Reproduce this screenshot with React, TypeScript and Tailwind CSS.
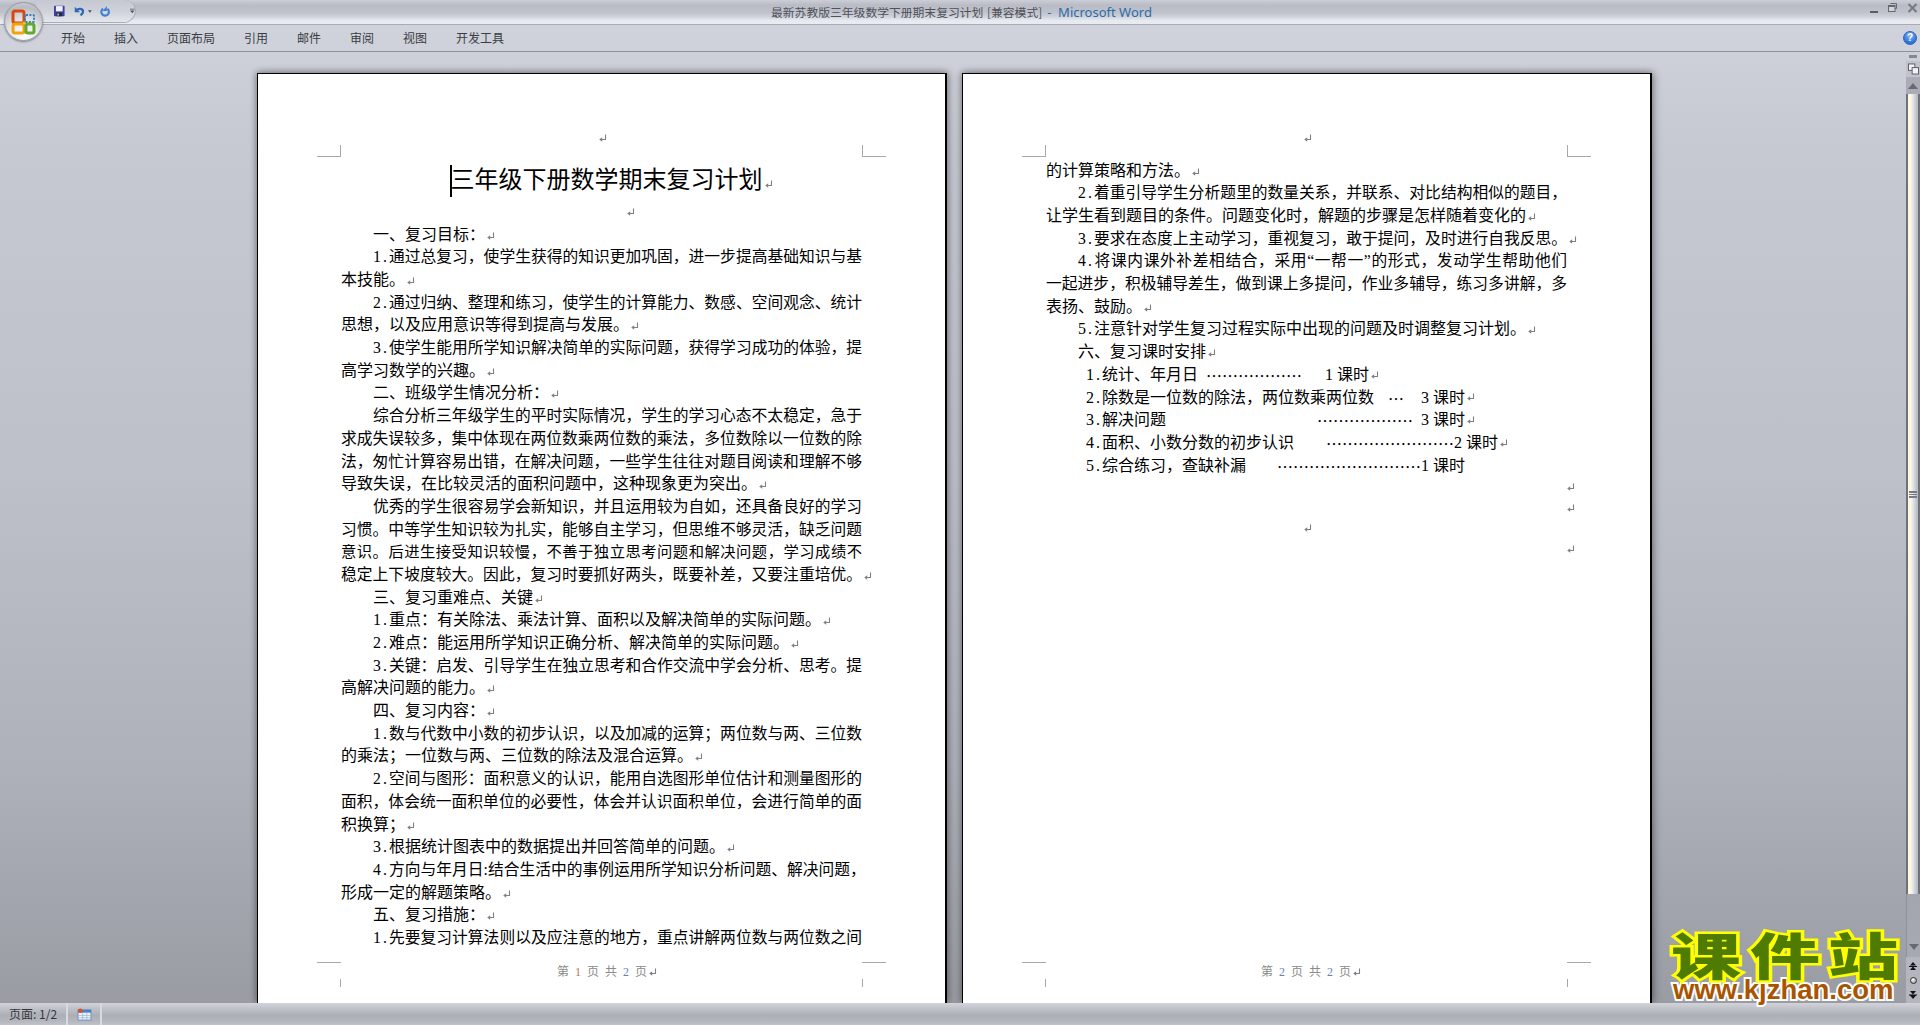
import React from 'react'

// paragraph mark shown by Word
const Mark = ({ className = '' }: { className?: string }) => (
  <svg viewBox="0 0 8 9" className={`inline-block w-[8px] h-[9px] ml-[2px] align-[-1px] ${className}`}>
    <path d="M6.5 0.5V5.5H2" fill="none" stroke="#808080" strokeWidth="1.1" />
    <path d="M0.2 5.5L3.2 3.2V7.8Z" fill="#808080" />
  </svg>
)

// SimSun keeps "1." at a full 16px, the serif fallback does not
const Num = ({ children }: { children: React.ReactNode }) => (
  <span className="inline-block w-[16px] tracking-[2px] [text-align-last:left]">{children}</span>
)

const withNum = (text: string) => {
  const m = text.match(/^(\d\.)(.*)$/)
  if (!m) return text
  return (
    <>
      <Num>{m[1]}</Num>
      {m[2]}
    </>
  )
}

type LineProps = {
  text: string
  indent?: boolean
  full?: boolean
  mark?: boolean
  small?: boolean
}

const Line = ({ text, indent, full, mark, small }: LineProps) => {
  if (full) {
    return (
      <div className={`flex h-[22.7px] leading-[22.7px] whitespace-nowrap ${indent ? 'pl-[32px]' : ''}`}>
        <div className={`flex-1 text-justify [text-align-last:justify] ${small ? 'text-[15.3px]' : 'text-[15.75px]'}`}>{withNum(text)}</div>
        {mark && <div className="w-0"><Mark /></div>}
      </div>
    )
  }
  return (
    <div className={`h-[22.7px] leading-[22.7px] text-[16px] whitespace-nowrap ${indent ? 'pl-[32px]' : ''}`}>
      {withNum(text)}
      {mark && <Mark />}
    </div>
  )
}

const pageOne: LineProps[] = [
  { text: '一、复习目标：', indent: true, mark: true },
  { text: '1.通过总复习，使学生获得的知识更加巩固，进一步提高基础知识与基', indent: true, full: true },
  { text: '本技能。', mark: true },
  { text: '2.通过归纳、整理和练习，使学生的计算能力、数感、空间观念、统计', indent: true, full: true },
  { text: '思想，以及应用意识等得到提高与发展。', mark: true },
  { text: '3.使学生能用所学知识解决简单的实际问题，获得学习成功的体验，提', indent: true, full: true },
  { text: '高学习数学的兴趣。', mark: true },
  { text: '二、班级学生情况分析：', indent: true, mark: true },
  { text: '综合分析三年级学生的平时实际情况，学生的学习心态不太稳定，急于', indent: true, full: true },
  { text: '求成失误较多，集中体现在两位数乘两位数的乘法，多位数除以一位数的除', full: true },
  { text: '法，匆忙计算容易出错，在解决问题，一些学生往往对题目阅读和理解不够', full: true },
  { text: '导致失误，在比较灵活的面积问题中，这种现象更为突出。', mark: true },
  { text: '优秀的学生很容易学会新知识，并且运用较为自如，还具备良好的学习', indent: true, full: true },
  { text: '习惯。中等学生知识较为扎实，能够自主学习，但思维不够灵活，缺乏问题', full: true },
  { text: '意识。后进生接受知识较慢，不善于独立思考问题和解决问题，学习成绩不', full: true, small: true },
  { text: '稳定上下坡度较大。因此，复习时要抓好两头，既要补差，又要注重培优。', full: true, mark: true },
  { text: '三、复习重难点、关键', indent: true, mark: true },
  { text: '1.重点：有关除法、乘法计算、面积以及解决简单的实际问题。', indent: true, mark: true },
  { text: '2.难点：能运用所学知识正确分析、解决简单的实际问题。', indent: true, mark: true },
  { text: '3.关键：启发、引导学生在独立思考和合作交流中学会分析、思考。提', indent: true, full: true },
  { text: '高解决问题的能力。', mark: true },
  { text: '四、复习内容：', indent: true, mark: true },
  { text: '1.数与代数中小数的初步认识，以及加减的运算；两位数与两、三位数', indent: true, full: true },
  { text: '的乘法；一位数与两、三位数的除法及混合运算。', mark: true },
  { text: '2.空间与图形：面积意义的认识，能用自选图形单位估计和测量图形的', indent: true, full: true },
  { text: '面积，体会统一面积单位的必要性，体会并认识面积单位，会进行简单的面', full: true },
  { text: '积换算；', mark: true },
  { text: '3.根据统计图表中的数据提出并回答简单的问题。', indent: true, mark: true },
  { text: '4.方向与年月日:结合生活中的事例运用所学知识分析问题、解决问题，', indent: true, full: true },
  { text: '形成一定的解题策略。', mark: true },
  { text: '五、复习措施：', indent: true, mark: true },
  { text: '1.先要复习计算法则以及应注意的地方，重点讲解两位数与两位数之间', indent: true, full: true },
]

const pageTwo: LineProps[] = [
  { text: '的计算策略和方法。', mark: true },
  { text: '2.着重引导学生分析题里的数量关系，并联系、对比结构相似的题目，', indent: true, full: true },
  { text: '让学生看到题目的条件。问题变化时，解题的步骤是怎样随着变化的', mark: true },
  { text: '3.要求在态度上主动学习，重视复习，敢于提问，及时进行自我反思。', indent: true, full: true, mark: true },
  { text: '4.将课内课外补差相结合，采用“一帮一”的形式，发动学生帮助他们', indent: true, full: true },
  { text: '一起进步，积极辅导差生，做到课上多提问，作业多辅导，练习多讲解，多', full: true },
  { text: '表扬、鼓励。', mark: true },
  { text: '5.注意针对学生复习过程实际中出现的问题及时调整复习计划。', indent: true, mark: true },
  { text: '六、复习课时安排', indent: true, mark: true },
]

const tabs = [
  { label: '开始', cls: 'ml-[61px]' },
  { label: '插入', cls: 'ml-[29px]' },
  { label: '页面布局', cls: 'ml-[29px]' },
  { label: '引用', cls: 'ml-[29px]' },
  { label: '邮件', cls: 'ml-[29px]' },
  { label: '审阅', cls: 'ml-[29px]' },
  { label: '视图', cls: 'ml-[29px]' },
  { label: '开发工具', cls: 'ml-[29px]' },
]

const OfficeButton = () => (
  <div className="absolute left-[4px] top-[2px] w-[39px] h-[39px] rounded-full border border-[#9a9da4] bg-[radial-gradient(circle_at_50%_85%,#ffffff_0%,#e6e7ea_40%,#b9bbc2_75%,#d8d9de_100%)] shadow-[0_1px_2px_rgba(0,0,0,0.4)] flex items-center justify-center">
    <svg viewBox="0 0 26 26" className="w-[26px] h-[26px]">
      <rect x="2" y="2" width="11" height="12" rx="2" fill="none" stroke="#d9480f" strokeWidth="3" />
      <rect x="14" y="6" width="9" height="7" rx="1" fill="none" stroke="#2f7fc4" strokeWidth="2" strokeDasharray="2 1.4" />
      <rect x="2" y="15" width="11" height="9" rx="2" fill="none" stroke="#f2a20c" strokeWidth="3" />
      <rect x="15" y="15" width="8" height="9" rx="2" fill="none" stroke="#62a832" strokeWidth="3" />
      <circle cx="13" cy="14" r="1.4" fill="#e7c02a" />
    </svg>
  </div>
)

const Qat = () => (
  <div className="absolute left-[36px] top-0 w-[100px] h-[23px] rounded-br-[14px] rounded-tr-[12px] border-r border-b border-[#a9acb4] bg-[linear-gradient(#c5c8d0,#cfd2da_50%,#e4e6ec)] flex items-center">
    <svg viewBox="0 0 14 14" className="ml-[18px] w-[14px] h-[14px]">
      <rect width="14" height="14" rx="1" fill="#3c3f9c" />
      <rect x="2.5" y="0.5" width="9" height="7" fill="#eef0fb" />
      <rect x="3.5" y="9.5" width="7" height="4.5" fill="#26263a" />
      <rect x="4.5" y="10.5" width="2" height="2.5" fill="#d0d0d8" />
    </svg>
    <svg viewBox="0 0 14 14" className="ml-[9px] w-[14px] h-[14px]">
      <path d="M3 6.5C6 2.8 12 3.6 12 7.6C12 9.6 10.8 11 8.6 12.6" fill="none" stroke="#2d68b8" strokeWidth="3" />
      <path d="M1 1.5V8.5H8Z" fill="#2d68b8" />
    </svg>
    <svg viewBox="0 0 6 4" className="ml-[4px] w-[5px] h-[3px]"><path d="M0 0H6L3 4Z" fill="#4a4d55" /></svg>
    <svg viewBox="0 0 14 14" className="ml-[8px] w-[14px] h-[14px]">
      <path d="M9.8 4.2A5 5 0 1 1 4 4" fill="none" stroke="#3f7fd0" strokeWidth="2.8" />
      <path d="M9 0.5V7H3.5Z" fill="#3f7fd0" />
    </svg>
    <svg viewBox="0 0 6 6" className="ml-[20px] w-[6px] h-[6px]">
      <path d="M0 0H6V1H0Z M0 2.5H6L3 6Z" fill="#555860" />
    </svg>
  </div>
)

const WindowButtons = () => (
  <div className="ml-auto mr-[2px] flex items-start pt-[3px] gap-[10px]">
    <div className="mt-[8px] w-[8px] h-[2px] bg-[#5a5d64]" />
    <svg viewBox="0 0 9 9" className="w-[9px] h-[9px]">
      <path d="M2.5 0.5H8.5V5.5H7" fill="none" stroke="#666971" />
      <rect x="0.5" y="2.5" width="6.5" height="6" fill="#d2d4da" stroke="#666971" />
      <rect x="0.5" y="2.5" width="6.5" height="1.5" fill="#666971" />
    </svg>
    <svg viewBox="0 0 10 10" className="w-[11px] h-[10px]">
      <path d="M1 1L9 9M9 1L1 9" stroke="#767981" strokeWidth="2" />
    </svg>
  </div>
)

const HelpIcon = () => (
  <div className="absolute right-[3px] top-[6px] w-[14px] h-[14px] rounded-full border border-[#2a63c4] bg-[radial-gradient(circle_at_50%_30%,#8ab8f5,#2d6fd6_70%)] flex items-center justify-center text-white text-[10px] font-bold leading-none font-['Liberation_Sans',sans-serif]">
    ?
  </div>
)

const CropMark = ({ className }: { className: string }) => <div className={`absolute border-[#a8a8a8] ${className}`} />

const PageMarks = () => (
  <>
    <CropMark className="left-[59px] top-[71px] w-[24px] h-[12px] border-b border-r" />
    <CropMark className="right-[59px] top-[71px] w-[24px] h-[12px] border-b border-l" />
    <CropMark className="left-[59px] top-[888px] w-[24px] h-[1px] border-b" />
    <CropMark className="right-[59px] top-[888px] w-[24px] h-[1px] border-b" />
    <CropMark className="left-[82px] top-[905px] w-[1px] h-[8px] border-l" />
    <CropMark className="right-[82px] top-[905px] w-[1px] h-[8px] border-l" />
  </>
)

const Footer = ({ page, offset }: { page: number; offset: string }) => (
  <div className={`absolute top-[888px] h-[20px] leading-[20px] text-[12px] text-[#8a8a8a] whitespace-nowrap [word-spacing:3px] ${offset}`}>
    第 <span className={page === 1 ? 'text-[#b07a60]' : 'text-[#6f7fa8]'}>{page}</span> 页 共 <span className="text-[#6f7fa8]">2</span> 页
    <Mark />
  </div>
)

const DocPage = ({ children }: { children: React.ReactNode }) => (
  <div className="relative shrink-0 w-[690px] h-[930px] bg-white border-t border-l border-black border-r-2 border-b-0 shadow-[2px_0_8px_rgba(0,0,0,0.3),-2px_0_6px_rgba(0,0,0,0.18),0_-2px_6px_rgba(0,0,0,0.1)] text-black font-['Liberation_Serif','Noto_Sans_CJK_SC',serif] px-[83px] pt-[53px]">
    {children}
    <PageMarks />
  </div>
)

const Scrollbar = () => (
  <div className="w-[14px] shrink-0 flex flex-col items-center">
    <div className="mt-[3px] w-[8px] h-[3px] bg-[#85888f]" />
    <div className="mt-[3px] w-[14px] h-[16px] bg-[#c0c3cb] flex items-center justify-center">
      <svg viewBox="0 0 12 12" className="w-[11px] h-[12px]">
        <rect x="0.5" y="0.5" width="7" height="7" fill="#f2f2f5" stroke="#555860" />
        <rect x="4.5" y="4.5" width="7" height="7" fill="#f2f2f5" stroke="#555860" />
      </svg>
    </div>
    <div className="w-[14px] h-[17px] bg-[#a9acb4] flex items-center justify-center">
      <svg viewBox="0 0 10 6" className="w-[10px] h-[6px]"><path d="M0 6L5 0L10 6Z" fill="#676a72" /></svg>
    </div>
    <div className="relative w-[14px] h-[800px] border-x-2 border-[#6f7279] bg-[linear-gradient(90deg,#fbf8ec_0%,#fff8d9_25%,#e3e5ea_50%,#c9ccd4_75%,#b4b7bf_100%)] flex items-center justify-center">
      <div className="w-[8px] h-[7px] border-y border-[#777a82] bg-[repeating-linear-gradient(#777a82_0,#777a82_1px,transparent_1px,transparent_2px)]" />
    </div>
    <div className="w-[14px] flex-1 bg-[linear-gradient(#a3a6ae,#a6a9b1)] border-l border-[#8f9299] flex items-end justify-center pb-[7px]">
      <svg viewBox="0 0 10 6" className="w-[10px] h-[6px]"><path d="M0 0L5 6L10 0Z" fill="#676a72" /></svg>
    </div>
    <div className="w-[14px] h-[46px] bg-[#b3b6be] flex flex-col items-center justify-around py-[1px]">
      <svg viewBox="0 0 8 8" className="w-[8px] h-[8px]"><path d="M4 0L7 3.5H1Z M0 4H8V5H0Z M4 4.5L7 8H1Z" fill="#111" /></svg>
      <div className="w-[7px] h-[7px] rounded-full border border-[#333] bg-[radial-gradient(circle_at_35%_30%,#fff,#888)]" />
      <svg viewBox="0 0 8 8" className="w-[8px] h-[8px]"><path d="M1 0H7L4 3.5Z M0 3.5H8V4.5H0Z M1 4.5H7L4 8Z" fill="#111" /></svg>
    </div>
  </div>
)

const Logo = () => (
  <div className="absolute left-[1681px] top-[928px] w-[207px] pointer-events-none">
    <div className="flex justify-between h-[50px] leading-[50px] text-[50px] font-black text-[#4f7c00] [-webkit-text-stroke:5px_#ffff00] [paint-order:stroke_fill] font-['Noto_Sans_CJK_SC',sans-serif]">
      <span className="inline-block scale-x-[1.4]">课</span>
      <span className="inline-block scale-x-[1.4]">件</span>
      <span className="inline-block scale-x-[1.4]">站</span>
    </div>
    <div className="-ml-[8px] h-[24px] leading-[24px] text-[27.5px] font-bold text-[#a85400] [-webkit-text-stroke:4px_#ffffff] [paint-order:stroke_fill] whitespace-nowrap font-['Liberation_Sans',sans-serif]">
      www.kjzhan.com
    </div>
  </div>
)

const dotCls = "font-['Noto_Sans_CJK_SC',sans-serif]"
const rowCls = 'h-[22.7px] leading-[22.7px] text-[16px] whitespace-nowrap pl-[40px] flex items-center'

const App = () => {
  return (
    <div className="relative w-[1920px] h-[1025px] overflow-hidden flex flex-col font-['Noto_Sans_CJK_SC',sans-serif] bg-[#cdd0d8]">
      {/* Title bar */}
      <div className="relative h-[25px] shrink-0 flex items-start border-b border-[#a8abb3] bg-[linear-gradient(#cbced5_0%,#b9bcc6_22%,#bfc2cb_50%,#cdd0d8_68%,#e6e9f0_85%,#e8ebf1_100%)]">
        <div className="absolute left-[771px] top-[3px] h-[18px] leading-[18px] text-[11.8px] text-[#4f5259] whitespace-nowrap">
          最新苏教版三年级数学下册期末复习计划 <span className="ml-[1px]">[兼容模式]</span>
          <span className="ml-[5px] text-[#2e6ba6] font-['Noto_Sans',sans-serif] text-[13px]">-&nbsp; Microsoft Word</span>
        </div>
        <WindowButtons />
      </div>

      {/* Ribbon tabs */}
      <div className="relative h-[27px] shrink-0 flex items-center border-b border-[#8e9198] bg-[#cfd2da] text-[12px] text-[#3a3d44] leading-none">
        {tabs.map((t) => (
          <span key={t.label} className={t.cls}>{t.label}</span>
        ))}
        <HelpIcon />
      </div>
      <Qat />
      <OfficeButton />

      {/* Document area */}
      <div className="flex-1 min-h-0 flex bg-[linear-gradient(#cdd0d8_0%,#c6c9d1_10%,#bdc0c8_45%,#aeb1b9_75%,#999ca3_100%)]">
        <div className="flex-1 flex gap-[15px] pl-[257px] pt-[21px] overflow-hidden">
          <DocPage>
            <div className="h-[22.65px] flex items-center justify-center"><Mark /></div>
            <div className="h-[52.7px] pt-[6px] pl-[20px] text-center text-[24px] leading-[48px] whitespace-nowrap">
              <span className="relative">
                <span className="absolute left-[-1px] top-[-2px] w-[2px] h-[32px] bg-black" />
                三年级下册数学期末复习计划
              </span>
              <Mark />
            </div>
            <div className="h-[21.3px] flex items-center justify-center pl-[56px]"><Mark /></div>
            {pageOne.map((l) => (
              <Line key={l.text} {...l} />
            ))}
            <Footer page={1} offset="left-[299px]" />
          </DocPage>
          <DocPage>
            <div className="h-[22.65px] flex items-center justify-center"><Mark /></div>
            <div className="mt-[10px]">
              {pageTwo.map((l) => (
                <Line key={l.text} {...l} />
              ))}
              <div className={rowCls}>
                <span><Num>1.</Num>统计、年月日</span>
                <span className={`ml-[8px] ${dotCls}`}>{'…'.repeat(6)}</span>
                <span className="ml-[23px]">1 课时</span><Mark />
              </div>
              <div className={rowCls}>
                <span><Num>2.</Num>除数是一位数的除法，两位数乘两位数</span>
                <span className={`ml-[14px] ${dotCls}`}>…</span>
                <span className="ml-[17px]">3 课时</span><Mark />
              </div>
              <div className={rowCls}>
                <span><Num>3.</Num>解决问题</span>
                <span className={`ml-[151px] ${dotCls}`}>{'…'.repeat(6)}</span>
                <span className="ml-[8px]">3 课时</span><Mark />
              </div>
              <div className={rowCls}>
                <span><Num>4.</Num>面积、小数分数的初步认识</span>
                <span className={`ml-[32px] ${dotCls}`}>{'…'.repeat(8)}</span>
                <span>2 课时</span><Mark />
              </div>
              <div className={rowCls}>
                <span><Num>5.</Num>综合练习，查缺补漏</span>
                <span className={`ml-[31px] ${dotCls}`}>{'…'.repeat(9)}</span>
                <span>1 课时</span>
              </div>
              <div className="h-[20.7px] flex items-center justify-end -mr-[8px]"><Mark /></div>
              <div className="h-[20.7px] flex items-center justify-end -mr-[8px]"><Mark /></div>
              <div className="h-[20.7px] flex items-center justify-center"><Mark /></div>
              <div className="h-[20.7px] flex items-center justify-end -mr-[8px]"><Mark /></div>
            </div>
            <Footer page={2} offset="left-[298px]" />
          </DocPage>
        </div>
        <Scrollbar />
      </div>

      {/* Status bar */}
      <div className="h-[22px] shrink-0 flex items-stretch bg-[linear-gradient(#d2d4d9_0%,#c0c2c9_25%,#adafb6_55%,#b4b6bd_80%,#c0c2c9_100%)] text-[12px] text-[#33363c]">
        <div className="w-[68px] border-r-2 border-[#d8dadf] flex items-center pl-[9px] whitespace-nowrap">页面: 1/2</div>
        <div className="w-[34px] border-r-2 border-[#d8dadf] flex items-center justify-center">
          <svg viewBox="0 0 16 14" className="w-[15px] h-[13px]">
            <rect x="1" y="2" width="14" height="11" fill="#eef3fa" stroke="#6b8cb8" />
            <rect x="1" y="2" width="14" height="3" fill="#4a7fc0" />
            <path d="M1 8H15M1 10.5H15M6 5V13M10.5 5V13" stroke="#9ab3d3" strokeWidth="0.8" />
            <circle cx="3.5" cy="3" r="2.5" fill="#d9512c" />
          </svg>
        </div>
        <div className="flex-1" />
      </div>

      <Logo />
    </div>
  )
}

export default App
